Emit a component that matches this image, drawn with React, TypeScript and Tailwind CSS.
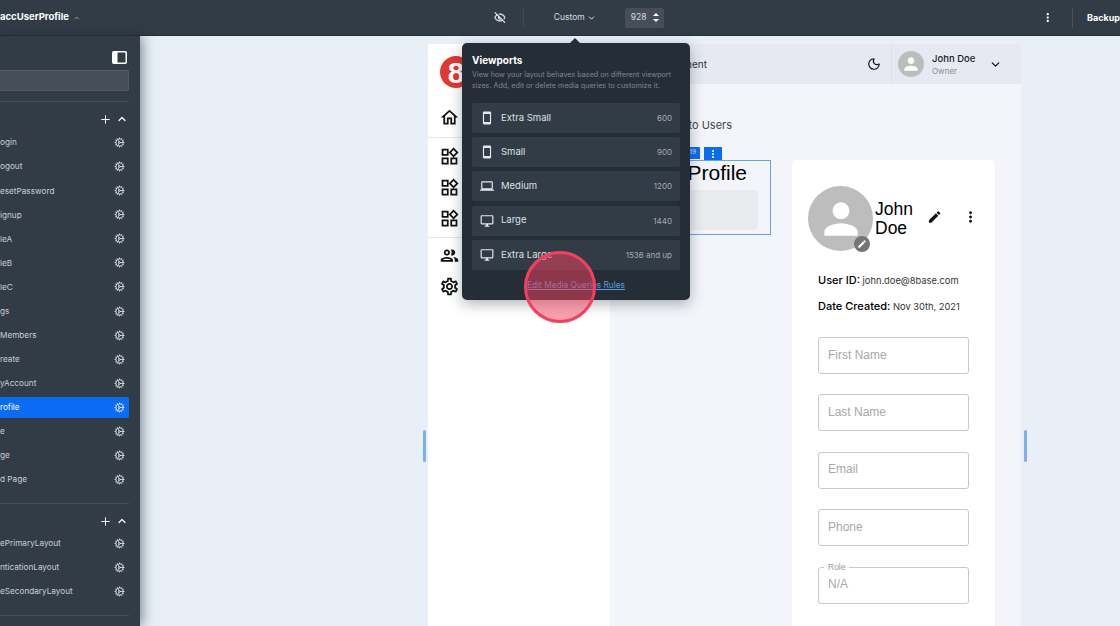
import { ChevronDown, ChevronUp, Cog, EyeOff, Moon, Plus } from 'lucide-react';
import {
  MdEdit,
  MdMoreVert,
  MdOutlineDesktopWindows,
  MdOutlineGroup,
  MdOutlineHome,
  MdOutlineLaptop,
  MdOutlineSettings,
  MdOutlineSmartphone,
  MdOutlineWidgets,
  MdPerson,
} from 'react-icons/md';

const pages = [
  'ogin',
  'ogout',
  'esetPassword',
  'ignup',
  'leA',
  'leB',
  'leC',
  'gs',
  'Members',
  'reate',
  'yAccount',
  'rofile',
  'e',
  'ge',
  'd Page',
];
const layouts = ['ePrimaryLayout', 'nticationLayout', 'eSecondaryLayout'];

const viewports = [
  { name: 'Extra Small', size: '600', Icon: MdOutlineSmartphone },
  { name: 'Small', size: '900', Icon: MdOutlineSmartphone },
  { name: 'Medium', size: '1200', Icon: MdOutlineLaptop },
  { name: 'Large', size: '1440', Icon: MdOutlineDesktopWindows },
  { name: 'Extra Large', size: '1536 and up', Icon: MdOutlineDesktopWindows },
];

const SideRow = ({ label, active }: { label: string; active?: boolean }) => (
  <div
    className={`flex h-[21px] items-center justify-between rounded-r-[2px] pr-[4px] text-[8.2px] whitespace-pre ${
      active ? 'bg-[#0a6cf5] text-white' : 'text-[#c9ced4]'
    }`}
  >
    <span>{label}</span>
    <Cog size={11} strokeWidth={2} className={active ? 'text-[#cfe2fb]' : 'text-[#d5d9dd]'} />
  </div>
);

const SectionHead = () => (
  <div className="flex h-[14px] items-center justify-end gap-[4px] pr-[1px] text-white">
    <Plus size={13} strokeWidth={1.8} />
    <ChevronUp size={12} strokeWidth={2.4} />
  </div>
);

const Sidebar = () => (
  <aside className="z-10 flex w-[140px] shrink-0 flex-col bg-[#323c46] pr-[11px] shadow-[2px_0_12px_rgba(30,40,50,0.55)]">
    <div className="flex h-[34px] items-center justify-end pr-[2px]">
      <svg width="15" height="13" viewBox="0 0 15 13" className="mt-[8px]">
        <rect x="0.75" y="0.75" width="13.5" height="11.5" rx="1" fill="none" stroke="#fff" strokeWidth="1.5" />
        <rect x="1" y="1" width="4.5" height="11" fill="#fff" />
      </svg>
    </div>
    <div className="h-[21px] rounded-r-[2px] border-y border-r border-[#525b65] bg-[#454e59]" />
    <div className="mt-[10px] h-[1px] bg-[#454e59]" />
    <div className="mt-[10px]">
      <SectionHead />
    </div>
    <div className="mt-[6px] flex flex-col gap-[3.08px]">
      {pages.map((p) => (
        <SideRow key={p} label={p} active={p === 'rofile'} />
      ))}
    </div>
    <div className="mt-[13px] h-[1px] bg-[#454e59]" />
    <div className="mt-[10px]">
      <SectionHead />
    </div>
    <div className="mt-[5px] flex flex-col gap-[3px]">
      {layouts.map((p) => (
        <SideRow key={p} label={p} />
      ))}
    </div>
    <div className="mt-[13px] h-[1px] bg-[#454e59]" />
  </aside>
);

const TopBar = () => (
  <header className="flex h-[36px] shrink-0 items-center border-b border-[#262e36] bg-[#323c46] text-white">
    <span className="w-[74px] text-[9.5px] font-bold whitespace-nowrap">accUserProfile</span>
    <ChevronUp size={8} strokeWidth={3} className="ml-[1px] translate-x-[3px] text-[#aab0b7]" />
    <EyeOff size={13} strokeWidth={2.4} className="ml-[417px] text-[#e6e8ea]" />
    <div className="ml-[17px] h-[20px] w-[1px] bg-[#414b55]" />
    <span className="ml-[30px] w-[31px] text-[8.5px] text-[#d7dbdf]">Custom</span>
    <ChevronDown size={10} strokeWidth={2.6} className="ml-[2px] text-[#e6e8ea]" />
    <div className="ml-[29px] flex h-[20px] w-[42px] items-center justify-between rounded-[2px] bg-[#454e59] pr-[5px] pl-[6px] text-[8.5px] text-[#d7dbdf]">
      928
      <span className="flex flex-col gap-[3px]">
        <span className="h-0 w-0 border-x-[3px] border-b-[3px] border-x-transparent border-b-white" />
        <span className="h-0 w-0 border-x-[3px] border-t-[3px] border-x-transparent border-t-white" />
      </span>
    </div>
    <MdMoreVert size={15} className="ml-[377px] text-white" />
    <div className="ml-[18px] h-[20px] w-[1px] bg-[#4a545e]" />
    <span className="ml-[14px] text-[9px] font-bold">Backup</span>
  </header>
);

const Field = ({ label, legend }: { label: string; legend?: string }) => (
  <div className="relative flex h-[37px] items-center rounded-[3px] border border-[#c9c9c9] pb-[2px] pl-[9px] font-['Liberation_Sans',sans-serif] text-[12px] text-[#a9a9a9]">
    {legend && (
      <span className="absolute top-[-6px] left-[5px] bg-white px-[4px] text-[8.5px] leading-[11px] text-[#999]">
        {legend}
      </span>
    )}
    {label}
  </div>
);

const ProfileCard = () => (
  <div className="ml-[21px] h-[480px] w-[203px] rounded-t-[5px] bg-white px-[16px] pt-[26px]">
    <div className="flex items-center">
      <div className="relative flex h-[65px] w-[65px] shrink-0 items-center justify-center rounded-full bg-[#bdbdbd]">
        <MdPerson size={50} className="text-white" />
        <span className="absolute right-[3px] bottom-[-1px] flex h-[16px] w-[16px] items-center justify-center rounded-full bg-[#757575]">
          <MdEdit size={10} className="text-white" />
        </span>
      </div>
      <div className="ml-[2px] w-[50px] font-['Liberation_Sans',sans-serif] text-[17.5px] leading-[19px] text-black">
        John Doe
      </div>
      <MdEdit size={16} className="mb-[4px] ml-[4px] text-[#111]" />
      <MdMoreVert size={18} className="mb-[4px] ml-[20px] text-[#111]" />
    </div>
    <div className="mt-[22px] pl-[10px] text-[9.3px] text-[#333]">
      <p className="leading-[14px]">
        <b className="text-[11px] font-medium text-black">User ID:</b> john.doe@8base.com
      </p>
      <p className="mt-[11px] leading-[14px]">
        <b className="text-[11px] font-medium text-black">Date Created:</b> Nov 30th, 2021
      </p>
    </div>
    <div className="mt-[23px] ml-[10px] flex w-[151px] flex-col gap-[20.4px]">
      <Field label="First Name" />
      <Field label="Last Name" />
      <Field label="Email" />
      <Field label="Phone" />
      <Field label="N/A" legend="Role" />
    </div>
  </div>
);

const PreviewNav = () => (
  <nav className="relative w-[182px] shrink-0 bg-white text-[#111]">
    <div className="mt-[12px] ml-[12px] flex h-[32px] w-[32px] items-center justify-center rounded-full bg-[#e0392f] font-['Liberation_Sans',sans-serif] text-[30px] font-bold text-white">
      8
    </div>
    <MdOutlineHome size={21} className="mt-[19px] ml-[11px]" />
    <div className="mt-[9px] h-[1px] w-[60px] bg-[#e4e6ea]" />
    <MdOutlineWidgets size={21} className="mt-[8px] ml-[11px]" />
    <MdOutlineWidgets size={21} className="mt-[10px] ml-[11px]" />
    <MdOutlineWidgets size={21} className="mt-[10px] ml-[11px]" />
    <div className="mt-[8px] h-[1px] w-[60px] bg-[#e4e6ea]" />
    <MdOutlineGroup size={21} className="mt-[7px] ml-[11px]" />
    <MdOutlineSettings size={21} className="mt-[10px] ml-[11px]" />
  </nav>
);

const PreviewMain = () => (
  <div className="flex min-w-0 flex-1 flex-col bg-[#f3f5fa]">
    <div className="flex h-[40px] shrink-0 items-center bg-[#e6e9f2] text-[#333]">
      <span className="w-[97px] text-right text-[10px] whitespace-nowrap">nent</span>
      <Moon size={14} strokeWidth={2} className="ml-[160px] text-[#111]" />
      <div className="ml-[10px] h-[38px] w-[1px] bg-[#dde0e8]" />
      <div className="ml-[6px] flex h-[26px] w-[26px] items-center justify-center rounded-full bg-[#bdbdbd]">
        <MdPerson size={20} className="text-white" />
      </div>
      <div className="ml-[8px] w-[48px]">
        <div className="text-[9.5px] leading-[13px] font-medium text-[#222]">John Doe</div>
        <div className="mt-[1px] text-[8px] leading-[11px] text-[#8d8d8d]">Owner</div>
      </div>
      <ChevronDown size={13} strokeWidth={2.4} className="ml-[9px] text-[#111]" />
    </div>
    <div className="w-[122px] shrink-0 pt-[34px] text-right text-[11px] leading-[14px] text-[#444]">to Users</div>
    <div className="flex flex-1 items-start pt-[28px]">
      <div className="relative h-[75px] w-[161px] shrink-0 border border-[#6ba3dc]">
        <div className="absolute top-[-14px] right-[70px] flex h-[12px] items-center rounded-t-[1px] bg-[#0a6cf5] px-[4px] text-[6.5px] text-[#cfe2fb]">
          19
        </div>
        <div className="absolute top-[-14px] right-[48px] flex h-[13px] w-[18px] items-center justify-center bg-[#0a6cf5] text-white">
          <MdMoreVert size={12} />
        </div>
        <div className="pr-[23px] text-right font-['Liberation_Sans',sans-serif] text-[21px] leading-[24px] text-black">
          Profile
        </div>
        <div className="mt-[5px] mr-[12px] ml-auto h-[40px] w-[130px] rounded-[4px] bg-[#eaebee]" />
      </div>
      <ProfileCard />
    </div>
  </div>
);

const ViewportsMenu = () => (
  <div className="absolute top-[7px] left-[322px] z-20 w-[228px] rounded-[5px] bg-[#252e36] px-[10px] pt-[11px] text-white shadow-[0_4px_14px_rgba(30,40,50,0.35)]">
    <span className="absolute top-[-5px] left-[107px] h-0 w-0 border-x-[6px] border-b-[6px] border-x-transparent border-b-[#252e36]" />
    <div className="text-[10px] leading-[13px] font-bold">Viewports</div>
    <p className="mt-[2px] w-[210px] text-[7.2px] leading-[11px] text-[#7f8892]">
      View how your layout behaves based on different viewport sizes. Add, edit or delete media queries to customize it.
    </p>
    <div className="mt-[12px] flex flex-col gap-[4.2px]">
      {viewports.map(({ name, size, Icon }) => (
        <div key={name} className="flex h-[30px] items-center rounded-[2px] bg-[#323c46] pr-[8px] pl-[8px]">
          <Icon size={14} className="text-[#e4e7ea]" />
          <span className="ml-[7px] flex-1 text-[9.5px] text-[#dde0e4]">{name}</span>
          <span className="text-[8px] text-[#a5abb2]">{size}</span>
        </div>
      ))}
    </div>
    <div className="flex h-[30px] items-center justify-center text-[8.3px] text-[#5d9bdc] underline">
      Edit Media Queries Rules
    </div>
  </div>
);

const App = () => {
  return (
    <div className="flex h-[626px] w-[1120px] flex-col overflow-hidden bg-[#e8eff7] font-['Inter',sans-serif]">
      <TopBar />
      <div className="relative flex min-h-0 flex-1">
        <Sidebar />
        <div className="relative flex-1 pt-[8px] pl-[288px]">
          <div className="flex h-[600px] w-[593px] overflow-hidden">
            <PreviewNav />
            <PreviewMain />
          </div>
          <span className="absolute top-[394px] left-[283px] h-[32px] w-[3px] rounded-full bg-[#7ab0f0]" />
          <span className="absolute top-[394px] left-[884px] h-[32px] w-[3px] rounded-full bg-[#7ab0f0]" />
          <ViewportsMenu />
          <span className="absolute top-[215px] left-[384px] z-30 h-[72px] w-[72px] rounded-full border-[3px] border-[#f43f5e] bg-[#f43f5e]/50" />
        </div>
      </div>
    </div>
  );
};

export default App;
